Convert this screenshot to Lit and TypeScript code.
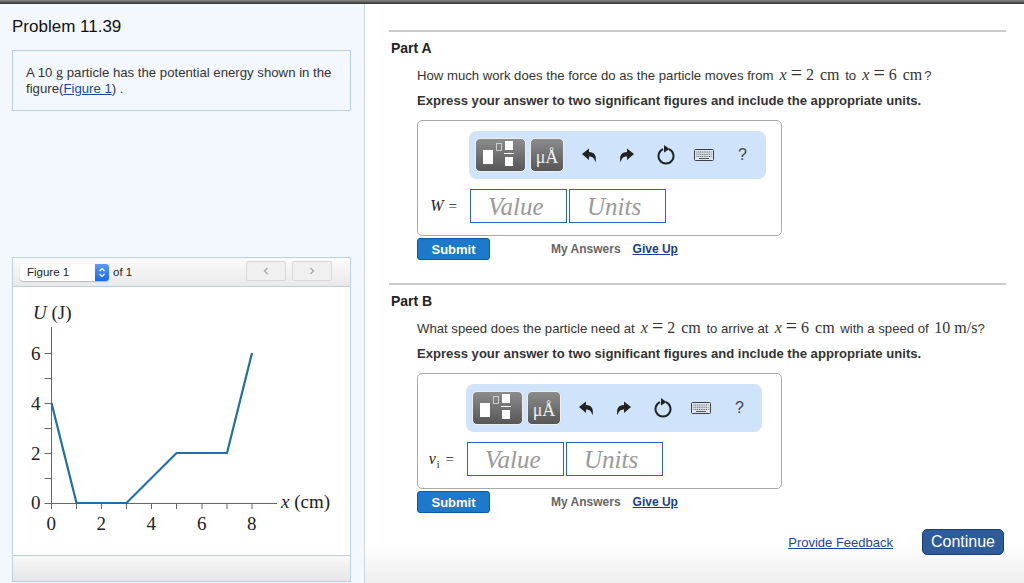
import { LitElement, html, css, svg } from "lit";
import { customElement } from "lit/decorators.js";

const math = (a: string) => html`<span class="m"><i>x</i><span class="eq">=</span>${a}<span class="u">cm</span></span>`;

const undo = svg`<path d="M1 7 L8 1.5 V5 C13.5 5 16 9 14.5 15.5 C13.5 11.5 12 9.5 8 9.5 V13 Z" fill="#222"/>`;
const redo = svg`<path d="M15 7 L8 1.5 V5 C2.5 5 0 9 1.5 15.5 C2.5 11.5 4 9.5 8 9.5 V13 Z" fill="#222"/>`;

function toolbar() {
  return html`<div class="toolbar">
    <div class="tbtn wide">
      <svg width="51" height="34" viewBox="0 0 51 34">
        <rect x="8" y="12" width="10" height="14" fill="#fff"/>
        <rect x="21.5" y="5.5" width="5" height="7" fill="none" stroke="#ccc"/>
        <rect x="30" y="3" width="8" height="9" fill="#fff"/>
        <rect x="29" y="15" width="10" height="1" fill="#fff"/>
        <rect x="30" y="19" width="8" height="9" fill="#fff"/>
      </svg>
    </div>
    <div class="tbtn unit">μÅ</div>
    <svg class="ic first" width="16" height="17" viewBox="0 0 16 17">${undo}</svg>
    <svg class="ic" width="16" height="17" viewBox="0 0 16 17">${redo}</svg>
    <svg class="ic reset" width="18" height="20" viewBox="0 0 18 20">
      <path d="M6 4.2 A7.5 7.5 0 1 0 12 4.2" fill="none" stroke="#222" stroke-width="2"/>
      <path d="M7 0 L12.5 4 L7 7.5 Z" fill="#222"/>
    </svg>
    <svg class="ic keys" width="20" height="12" viewBox="0 0 20 12">
      <rect x="0.5" y="0.5" width="19" height="11" rx="1" fill="#dfe7ee" stroke="#3a3f44"/>
      <path d="M2.5 3h15M2.5 5.2h15M2.5 7.4h15" stroke="#555" stroke-width="1" stroke-dasharray="1 .8"/>
      <path d="M5 9.5h10" stroke="#555"/>
    </svg>
    <span class="help">?</span>
  </div>`;
}

function part(
  cls: string,
  name: string,
  question: unknown,
  label: unknown
) {
  return html`<section class="part ${cls}">
    <div class="rule"></div>
    <h3>${name}</h3>
    <div class="body">
      <p class="q">${question}</p>
      <p class="ins">Express your answer to two significant figures and include the appropriate units.</p>
      <div class="answer">
        ${toolbar()}
        <div class="row">
          <span class="lbl">${label}</span>
          <div class="inp">Value</div>
          <div class="inp">Units</div>
        </div>
      </div>
      <div class="actions">
        <button class="submit">Submit</button>
        <span class="my">My Answers</span>
        <a class="give">Give Up</a>
      </div>
    </div>
  </section>`;
}

const ticksY = [354, 379, 404, 429, 454, 479, 504];
const ticksX = [51.5, 76.5, 101.5, 126.5, 151.5, 176.5, 202, 227, 252];

function graph() {
  return html`<svg class="graph" width="337" height="268" viewBox="13 288 337 268">
    <g stroke="#666" stroke-width="1" fill="none">
      <path d="M51.5 328 V504.5 H277"/>
      ${ticksY.map((y) => svg`<path d="M44.5 ${y}.5 H51.5"/>`)}
      ${ticksX.map((x) => svg`<path d="M${x} 504 V510"/>`)}
    </g>
    <path d="M51.5 404 L76.5 504 H126.5 L176.5 454 H227 L252 354" fill="none" stroke="#1f6fa8" stroke-width="2.2"/>
    <g font-family="'Liberation Serif',serif" font-size="19" fill="#222">
      <text x="33" y="320"><tspan font-style="italic">U</tspan> (J)</text>
      <text x="31" y="361">6</text>
      <text x="31" y="411">4</text>
      <text x="31" y="461">2</text>
      <text x="31" y="510">0</text>
      <text x="46.5" y="531">0</text>
      <text x="96.5" y="531">2</text>
      <text x="146.5" y="531">4</text>
      <text x="197" y="531">6</text>
      <text x="247" y="531">8</text>
      <text x="281" y="509"><tspan font-style="italic">x</tspan> (cm)</text>
    </g>
  </svg>`;
}

@customElement("app-root")
export class AppRoot extends LitElement {
  static styles = css`
    :host {
      display: block;
      width: 1024px;
      height: 583px;
      overflow: hidden;
      font-family: "Liberation Sans", Arial, sans-serif;
      color: #222;
    }
    .top {
      height: 4px;
      background: linear-gradient(#888, #333);
    }
    .main {
      display: flex;
      height: 579px;
    }
    .left {
      width: 365px;
      box-sizing: border-box;
      flex: none;
      background: #f3f8ff;
      border-right: 1px solid #c9d3de;
      padding: 0 13px 0 12px;
      display: flex;
      flex-direction: column;
    }
    h1 {
      margin: 13px 0 0;
      font-size: 17px;
      line-height: 20px;
      font-weight: 400;
      color: #111;
    }
    .intro {
      margin-top: 13px;
      height: 61px;
      box-sizing: border-box;
      border: 1px solid #b9cfe2;
      padding: 14px 13px 0;
      font-size: 13.2px;
      line-height: 16px;
      color: #333;
    }
    .intro .s {
      font-family: "Liberation Serif", serif;
      font-size: 14px;
    }
    a {
      color: #1a46a0;
      text-decoration: underline;
    }
    .figure {
      margin-top: 146px;
      height: 325px;
      box-sizing: border-box;
      border: 1px solid #b9cfe2;
      background: #fff;
      display: flex;
      flex-direction: column;
    }
    .fhead {
      height: 29px;
      box-sizing: border-box;
      flex: none;
      border-bottom: 1px solid #b9cfe2;
      background: linear-gradient(#fbfbfb, #e9e9e9);
      display: flex;
      align-items: center;
      padding: 0 18px 0 7px;
      font-size: 11.5px;
      color: #222;
    }
    .select {
      width: 89px;
      height: 17px;
      box-sizing: border-box;
      background: #fff;
      border-radius: 3px;
      box-shadow: 0 1px 1px #bbb;
      display: flex;
      align-items: center;
      justify-content: space-between;
      padding-left: 7px;
      margin-right: 4px;
    }
    .arrows {
      width: 14px;
      height: 17px;
      background: linear-gradient(#5a9cf8, #1b68ee);
      border-radius: 0 3px 3px 0;
      display: flex;
      align-items: center;
      justify-content: center;
    }
    .nav {
      margin-left: auto;
      display: flex;
      gap: 6px;
      margin-top: -2px;
    }
    .nav div {
      width: 38px;
      height: 18px;
      border: 1px solid #d8d8d8;
      border-radius: 2px;
      background: #f0f0f0;
      display: flex;
      align-items: center;
      justify-content: center;
    }
    .graph {
      display: block;
      flex: none;
    }
    .ffoot {
      flex: 1;
      border-top: 1px solid #b9cfe2;
      background: linear-gradient(#f8f8f8, #e6e6e6);
    }
    .right {
      flex: 1;
      background: linear-gradient(#fff 0, #fff 540px, #eee 579px);
      padding: 26px 18px 0 24px;
      display: flex;
      flex-direction: column;
    }
    .rule {
      height: 2px;
      background: #ccc;
    }
    h3 {
      margin: 8px 0 0 2px;
      font-size: 14px;
      line-height: 16px;
      font-weight: 700;
      color: #222;
    }
    .b {
      margin-top: 23px;
    }
    .body {
      margin-left: 28px;
    }
    .q {
      margin: 8px 0 0;
      height: 20px;
      font-size: 13.15px;
      line-height: 18px;
      color: #333;
      white-space: nowrap;
    }
    .m {
      font-family: "Liberation Serif", serif;
      font-size: 16px;
      margin: 0 2px 0 2.5px;
    }
    .m i {
      margin-right: 4px;
    }
    .eq {
      margin-right: 4px;
      font-size: 20px;
    }
    .u {
      margin-left: 6px;
    }
    .si {
      font-family: "Liberation Serif", serif;
      font-size: 16px;
      margin-left: 2px;
    }
    .ins {
      margin: 9px 0 0;
      font-size: 13.1px;
      line-height: 16px;
      font-weight: 700;
      color: #333;
      white-space: nowrap;
    }
    .answer {
      margin-top: 11px;
      width: 365px;
      height: 116px;
      box-sizing: border-box;
      border: 1px solid #aaa;
      border-radius: 5px;
      padding: 10px 0 0 51px;
      background: #fff;
    }
    .b .answer {
      padding-left: 48px;
    }
    .toolbar {
      width: 297px;
      height: 48px;
      box-sizing: border-box;
      background: #cfe3fb;
      border-radius: 8px;
      display: flex;
      align-items: center;
      padding-left: 6px;
    }
    .b .toolbar {
      width: 296px;
    }
    .tbtn {
      height: 34px;
      box-sizing: border-box;
      border-radius: 5px;
      border: 1px solid #eee;
      background: linear-gradient(#8c8c8c, #565656);
    }
    .wide {
      width: 51px;
      margin-right: 4px;
      overflow: hidden;
    }
    .wide svg {
      display: block;
      margin: -1px;
    }
    .unit {
      width: 34px;
      color: #eee;
      font-family: "Liberation Serif", serif;
      font-size: 18px;
      line-height: 36px;
      text-align: center;
      white-space: nowrap;
    }
    .ic {
      flex: none;
      margin-left: 22px;
    }
    .ic.first {
      margin-left: 17px;
    }
    .ic.keys {
      margin-left: 19px;
    }
    .help {
      margin-left: 24px;
      font-size: 16px;
      color: #444;
    }
    .row {
      margin-top: 10px;
      margin-left: -51px;
      display: flex;
      align-items: center;
      gap: 2px;
    }
    .b .row {
      margin-left: -48px;
    }
    .lbl {
      width: 50px;
      box-sizing: border-box;
      text-align: right;
      padding-right: 11px;
      font-family: "Liberation Serif", serif;
      font-size: 15px;
      white-space: nowrap;
      color: #222;
    }
    .b .lbl {
      width: 47px;
    }
    .lbl i {
      font-size: 16px;
      margin-right: 5px;
    }
    .b .lbl i {
      margin-right: 1px;
    }
    .lbl sub {
      font-size: 10px;
      line-height: 0;
      margin-right: 6px;
    }
    .inp {
      width: 97px;
      height: 34px;
      box-sizing: border-box;
      border: 1px solid #2a62c4;
      font-family: "Liberation Serif", serif;
      font-style: italic;
      font-size: 25px;
      line-height: 34px;
      color: #999;
      padding-left: 17px;
      background: #fff;
    }
    .actions {
      margin-top: 2px;
      display: flex;
      align-items: center;
      font-size: 12px;
      font-weight: 700;
    }
    .submit {
      width: 73px;
      height: 22px;
      box-sizing: border-box;
      padding: 0;
      background: #1b7acb;
      border: 1px solid #0d5a9e;
      border-radius: 3px;
      color: #fff;
      font: 700 13px "Liberation Sans", Arial, sans-serif;
    }
    .my {
      margin-left: 61px;
      color: #666;
    }
    .give {
      margin-left: 12px;
      color: #1a3d94;
    }
    .foot {
      margin-top: 16px;
      margin-right: 2px;
      display: flex;
      justify-content: flex-end;
      align-items: center;
      font-size: 13px;
    }
    .cont {
      margin-left: 29px;
      width: 82px;
      height: 26px;
      box-sizing: border-box;
      padding: 0;
      background: #2e5b99;
      border: 1px solid #1a3e75;
      border-radius: 5px;
      color: #fff;
      font: 16px "Liberation Sans", Arial, sans-serif;
    }
  `;

  render() {
    return html`
      <div class="top"></div>
      <div class="main">
        <aside class="left">
          <h1>Problem 11.39</h1>
          <div class="intro">
            A 10 <span class="s">g</span> particle has the potential energy shown in the
            figure(<a>Figure 1</a>) .
          </div>
          <div class="figure">
            <div class="fhead">
              <div class="select">
                <span>Figure 1</span>
                <span class="arrows">
                  <svg width="8" height="11" viewBox="0 0 8 11">
                    <path d="M1.5 4 L4 1.5 L6.5 4 M1.5 7 L4 9.5 L6.5 7" fill="none" stroke="#fff" stroke-width="1.2"/>
                  </svg>
                </span>
              </div>
              <span>of 1</span>
              <div class="nav">
                <div><svg width="6" height="8" viewBox="0 0 6 8"><path d="M4.5 1 L1.5 4 L4.5 7" fill="none" stroke="#aaa" stroke-width="1.4"/></svg></div>
                <div><svg width="6" height="8" viewBox="0 0 6 8"><path d="M1.5 1 L4.5 4 L1.5 7" fill="none" stroke="#aaa" stroke-width="1.4"/></svg></div>
              </div>
            </div>
            ${graph()}
            <div class="ffoot"></div>
          </div>
        </aside>
        <main class="right">
          ${part(
            "a",
            "Part A",
            html`How much work does the force do as the particle moves from ${math("2")} to ${math("6")}?`,
            html`<i>W</i>=`
          )}
          ${part(
            "b",
            "Part B",
            html`What speed does the particle need at ${math("2")} to arrive at ${math("6")} with a speed of <span class="si">10 m/s</span>?`,
            html`<i>v</i><sub>i</sub>=`
          )}
          <div class="foot">
            <a>Provide Feedback</a>
            <button class="cont">Continue</button>
          </div>
        </main>
      </div>
    `;
  }
}
